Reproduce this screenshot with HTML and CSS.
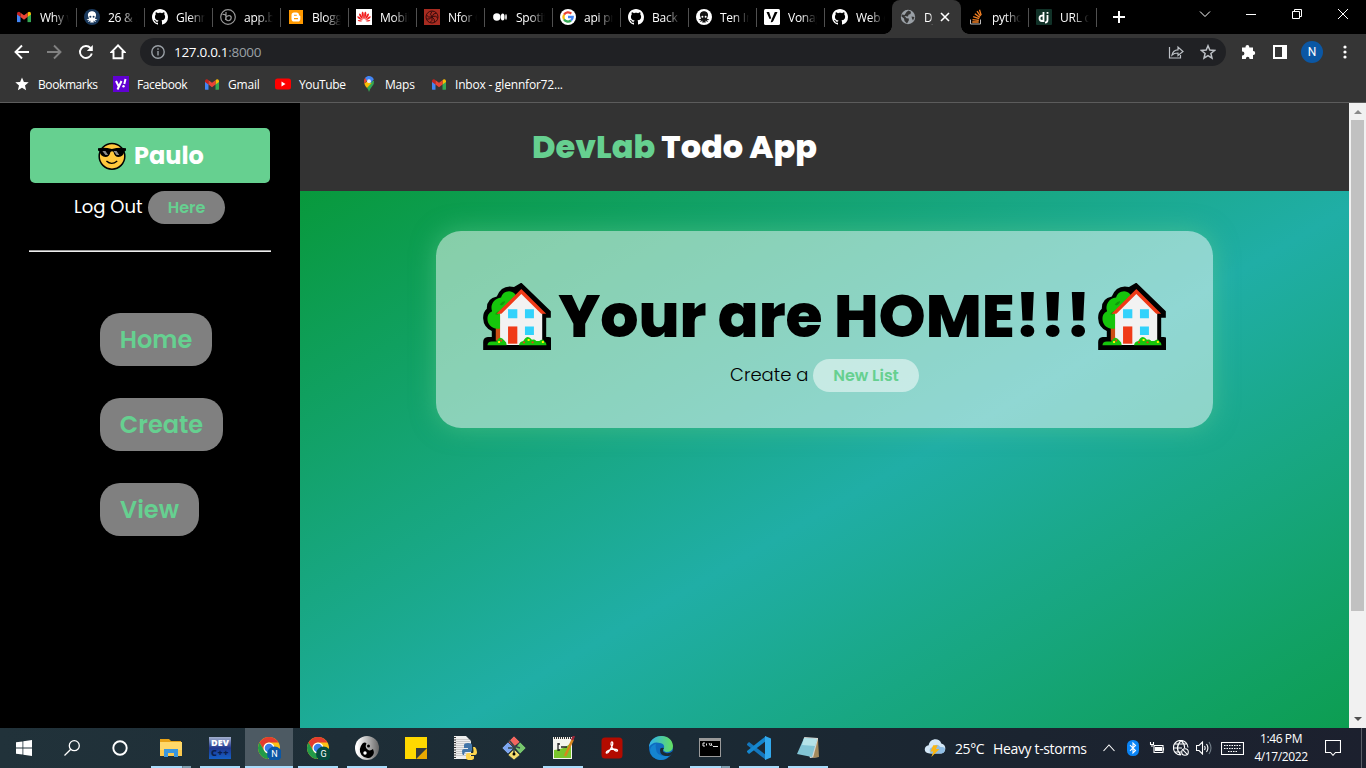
FILE: index.html
```html
<!DOCTYPE html>
<html lang="en">
<head>
<meta charset="utf-8">
<title>DevLab Todo App</title>
<link rel="stylesheet" href="styles.css">
</head>
<body>
<svg class="defs" width="0" height="0">
  <symbol id="gmail" viewBox="0 0 16 12"><path fill="#4285f4" d="M1 12h3V5L0 2v9q0 1 1 1z"/><path fill="#34a853" d="M12 12h3q1 0 1-1V2l-4 3z"/><path fill="#fbbc04" d="M12 1v5l4-3V2q-.4-2.600-2.500-2z"/><path fill="#c5221f" d="M0 2v1l4 3V1L2.500 0Q.4-.6 0 2z"/><path fill="#ea4335" d="M4 6V1l4 3 4-3v5L8 9z"/></symbol>
  <symbol id="github" viewBox="0 0 16 16"><path fill="#fff" d="M8 0C3.580 0 0 3.580 0 8c0 3.540 2.290 6.530 5.470 7.590.4.070.55-.17.55-.38 0-.19-.01-.82-.01-1.490-2.010.37-2.530-.49-2.690-.94-.09-.23-.48-.94-.82-1.130-.28-.15-.68-.52-.01-.53.63-.01 1.080.58 1.230.82.72 1.210 1.870.87 2.330.66.070-.52.28-.87.51-1.070-1.780-.2-3.640-.89-3.640-3.950 0-.87.31-1.590.82-2.150-.08-.2-.36-1.020.08-2.120 0 0 .67-.21 2.200.82.64-.18 1.320-.27 2-.27s1.360.09 2 .27c1.530-1.040 2.200-.82 2.200-.82.44 1.100.16 1.920.08 2.120.51.56.82 1.270.82 2.150 0 3.070-1.870 3.750-3.650 3.950.29.25.54.73.54 1.480 0 1.070-.01 1.930-.01 2.200 0 .21.15.46.55.38A8 8 0 0 0 16 8c0-4.420-3.580-8-8-8z"/></symbol>
  <symbol id="octo" viewBox="0 0 16 16"><path d="M8 2.300c-3 0-4.600 2.200-3.900 4.800.2 1.200.8 1.900.9 2.500-.4.800-1.600.9-2.300.4.300 1 1.600 1.500 2.500 1.100-.2.800-.8 1.200-1.400 1.300.9.500 2.200.2 2.700-.8.100.7-.1 1.400-.4 1.800h3.800c-.3-.4-.5-1.100-.4-1.800.5 1 1.800 1.300 2.700.8-.6-.1-1.200-.5-1.400-1.300.9.400 2.200-.1 2.500-1.100-.7.500-1.900.4-2.300-.4.100-.6.700-1.300.9-2.500.7-2.600-.9-4.800-3.900-4.800z"/><circle cx="6.400" cy="7.800" r="1" fill="var(--eye)"/><circle cx="9.600" cy="7.800" r="1" fill="var(--eye)"/></symbol>
  <symbol id="chrome" viewBox="0 0 24 24"><circle cx="12" cy="12" r="11" fill="#fbc116"/><path fill="#e33b2e" d="M2.500 6.500A11 11 0 0 1 21.500 6.500H12A5.500 5.500 0 0 0 7.200 14.700z"/><path fill="#229a48" d="M2.500 6.500 7.200 14.700A5.500 5.500 0 0 0 13 17.400L11 23A11 11 0 0 1 2.500 6.500z"/><circle cx="12" cy="12" r="5.500" fill="#fff"/><circle cx="12" cy="12" r="4.300" fill="#3b7de9"/></symbol>
  <symbol id="house" viewBox="189 188 204 202"><path d="M189 390v-24q0-14 14-15h12v-18q-25-12-26-38-1-18 11-29-1-31 30-37 14-37 52-29l22-13 89 86v20h-14v58h8q16 1 16 15v24z"/><path fill="#cb4f13" d="M227 310h18v52h-18z"/><path fill="#16c60c" d="M240 325c-25 5-39-14-38-30 0-13 8-19 14-22-7-17 5-39 27-41 3-17 27-28 42-11l10 16-52 48z"/><path fill="#119a0a" d="M239 253c4-7 11-10 16-11 0 7-5 11-11 14zM225 282q4-7 14-10l-6 12z"/><path fill="#f2f2f2" d="M304 215 240 280v95h127v-95z"/><path fill="#f03a17" d="m304 206 75 75h-15l-60-60-60 60h-15z"/><path fill="#32d2fb" d="M264 267h28v27h-28zM315 267h27v27h-27zM315 319h27v26h-27z"/><path fill="#f03a17" d="M264 319h28v52h-28z"/><path fill="#16c60c" d="M202 376q0-12 13-12h14q10-20 24-3 7 4 7 15zM297 376q2-12 13-13 12-22 26-4 9-2 13 4h9q12-10 16 1 6 3 6 12z"/><path fill="#fff200" d="M234 363h6v6h-6zM323 357h6v6h-6zM366 363h6v6h-6z"/><path fill="#f03a17" d="M241 358h5v6h-5zM309 364h6v6h-6zM335 364h6v6h-6z"/></symbol>
</svg>

<header class="tabstrip">
  <div class="tab"><svg class="fav" viewBox="0 0 16 16"><use href="#gmail" x="1" y="2.500" width="14" height="11"/></svg><span>Why w</span></div>
  <div class="tab"><svg class="fav eye-navy" viewBox="0 0 16 16"><circle cx="8" cy="8" r="8" fill="#1b3a5e"/><use href="#octo" fill="#fff"/></svg><span>26 &amp; 2</span></div>
  <div class="tab"><svg class="fav"><use href="#github"/></svg><span>Glennf</span></div>
  <div class="tab"><svg class="fav" viewBox="0 0 16 16" fill="none" stroke="#999" stroke-width="1.200"><circle cx="8" cy="8" r="7.300"/><path d="M2.500 5.500Q5.500 5 6 7L5.500 11M6 3v7.500q2.500 2.500 4.700 0 1.300-2.500-.6-3.700-2.200-.8-4 1.400"/></svg><span>app.bit</span></div>
  <div class="tab"><svg class="fav" viewBox="0 0 16 16"><path fill="#f90" d="M1 1h14v14H1z"/><path fill="#fff" fill-rule="evenodd" d="M6 3.500h2.500q2.500 0 2.500 2.800l1.300.7v2.700Q12.300 12.500 10 12.500H6q-2.500 0-2.500-2.800V6Q3.500 3.500 6 3.500zm0 2.300v1h2.800v-1zm0 3.200v1.200h4V9z"/></svg><span>Blogge</span></div>
  <div class="tab"><svg class="fav" viewBox="0 0 16 16"><path fill="#fff" d="M0 0h16v16H0z"/><g fill="#f21b1b"><path d="M7.700 10.500Q4 4 6.800 2.500q1.500 1 .9 8zM8.300 10.500Q12 4 9.200 2.500q-1.500 1-.9 8zM7 11Q2.200 6.500 3.200 4.500 5.500 4 7 11zM9 11q4.800-4.500 3.800-6.500Q10.500 4 9 11zM6.500 11.500Q1 9.500 1.300 7.200 3.500 7 6.500 11.500zM9.500 11.500q5.500-2 5.200-4.300-2.200-.2-5.200 4.300zM6.300 12Q3 13.500 1.600 11q2-.5 4.700 1zM9.700 12q3.300 1.500 4.700-1-2-.5-4.700 1z"/></g></svg><span>Mobile</span></div>
  <div class="tab"><svg class="fav" viewBox="0 0 16 16"><path fill="#a72b20" d="M0 0h16v16H0z"/><g fill="none" stroke="#350b0b"><circle cx="8" cy="8" r="6"/><path d="M8 8Q5 5 8 2.500M8 8q4-2 5.500 1M8 8q1 4-2 5.500M8 8q-4 1-5.500-2M8 8q1-4 4.500-4M8 8q3 2 2.500 5M8 8q-3 3-5.500 2"/></g></svg><span>Nfor G</span></div>
  <div class="tab"><svg class="fav" viewBox="0 0 16 16" fill="#fff"><circle cx="4.800" cy="8" r="3.700"/><ellipse cx="10.700" cy="8" rx="1.900" ry="3.500"/><ellipse cx="14" cy="8" rx=".8" ry="3.100"/></svg><span>Spotify</span></div>
  <div class="tab"><svg class="fav" viewBox="0 0 16 16"><circle cx="8" cy="8" r="8" fill="#fff"/><g fill="none" stroke-width="2.300"><path stroke="#ea4335" d="M4 5.700A4.700 4.700 0 0 1 11.300 4.700"/><path stroke="#fbbc05" d="M4 10.300A5 5 0 0 1 4 5.700"/><path stroke="#34a853" d="M4 10.300A4.700 4.700 0 0 0 11 11.500"/><path stroke="#4285f4" d="M8 8h4.700Q12.700 10 11 11.500"/></g></svg><span>api pro</span></div>
  <div class="tab"><svg class="fav"><use href="#github"/></svg><span>Back e</span></div>
  <div class="tab"><svg class="fav eye-white" viewBox="0 0 16 16"><circle cx="8" cy="8" r="8" fill="#fff"/><use href="#octo" fill="#111"/></svg><span>Ten Im</span></div>
  <div class="tab"><svg class="fav" viewBox="0 0 16 16"><rect width="16" height="16" rx="1.500" fill="#fff"/><path d="M2.500 3h2.600l2.200 6.500L5.500 10zM10.800 3h2.700L9.300 12q-.7 1.500-2.600 1.300l.7-2.200z"/></svg><span>Vonage</span></div>
  <div class="tab"><svg class="fav"><use href="#github"/></svg><span>Web d</span></div>
  <div class="tab active"><svg class="fav" viewBox="0 0 16 16"><circle cx="8" cy="8" r="7.200" fill="#9aa0a6"/><path fill="#353535" d="M8.500 1.500 11 2.700 10.500 5l-2 .7L8 7.500 4.500 7l2 2.200 2.300.3v2L7 14.500 4.500 12 4 9.500 1.500 7.500q0-.8.5-2L4.500 6 6.500 3zM11.500 7.500l3 .5-1.500 3.500-1-2z"/></svg><span>Dj</span><svg class="close" viewBox="0 0 10 10"><path d="m1 1 8 8M9 1 1 9"/></svg></div>
  <div class="tab"><svg class="fav" viewBox="0 0 16 16" fill="none"><path stroke="#bcbbbb" d="M2.500 10.500V15h10v-4.500"/><path stroke="#f48024" stroke-width="1.300" d="M4.300 13h6.400M4.500 10.700l6.300.6M5.200 7.700l6 2M6.800 4.800l5 3.600M9 2.200l3.500 5M11.500.7l1.700 5.500"/></svg><span>pythor</span></div>
  <div class="tab"><svg class="fav" viewBox="0 0 16 16"><rect width="16" height="16" rx="1" fill="#113228"/><g stroke="#fff" stroke-width="1.800" fill="none"><path d="M7.500 3v9H6Q3.500 12 3.500 9.300 3.500 7 6 6.700h1.500M11.500 6v5q0 2.500-2.500 2.700M11.500 3v1.700"/></g></svg><span>URL di</span></div>
  <svg class="newtab" viewBox="0 0 12 12"><path d="M6 0v12M0 6h12"/></svg>
  <div class="wincontrols">
    <svg viewBox="0 0 12 12"><path d="m1 3.500 5 5 5-5"/></svg>
    <svg viewBox="0 0 12 12"><path d="M1 6.500h10"/></svg>
    <svg viewBox="0 0 12 12"><path d="M1.500 3.500h7v7h-7zM3.500 3.500v-2h7v7h-2"/></svg>
    <svg viewBox="0 0 12 12"><path d="m1 1 10 10M11 1 1 11"/></svg>
  </div>
</header>

<nav class="toolbar">
  <svg class="nav" viewBox="0 0 16 16"><path d="M15 8H2M8 1.500 1.500 8 8 14.500"/></svg>
  <svg class="nav dim" viewBox="0 0 16 16"><path d="M1 8h13M8 1.500 14.500 8 8 14.500"/></svg>
  <svg class="nav" viewBox="0 0 16 16"><path d="M13.800 9.500A6 6 0 1 1 12.500 4"/><path class="solid" d="M14.800 1v6h-6z"/></svg>
  <svg class="nav" viewBox="0 0 16 16"><path d="M8 1.300 1.500 8H3.500v6.300h9V8h2z"/></svg>
  <div class="omnibox">
    <svg class="info" viewBox="0 0 14 14"><circle cx="7" cy="7" r="6.200"/><path d="M7 6v4.500M7 3.300v1.500"/></svg>
    <span class="url"><b>127.0.0.1</b>:8000</span>
    <svg class="omni-icon" viewBox="0 0 16 16"><path d="M1.500 3v11h11v-3M4 11q1-5 6-5.200V3l5 4.500-5 4V9Q6 9 4 11z"/></svg>
    <svg class="omni-icon star" viewBox="0 0 16 16"><path d="m8 1.800 1.800 4.300 4.700.4-3.600 3 1.100 4.600-4-2.500-4 2.500 1.100-4.600-3.600-3 4.700-.4z"/></svg>
  </div>
  <svg class="ext" viewBox="0 0 16 16"><path d="M2 3.500h3.500V3a1.900 1.900 0 0 1 3.800 0v.5H13v3.600h.3a1.900 1.900 0 0 1 0 3.800H13V15H9.500v-.5a1.800 1.800 0 0 0-3.600 0v.5H2v-3.600h.5a1.900 1.900 0 0 0 0-3.800H2z"/></svg>
  <svg class="panel" viewBox="0 0 14 14"><path fill="#fff" fill-rule="evenodd" d="M0 0h14v14H0zM2 2v10h7V2z"/></svg>
  <span class="avatar">N</span>
  <svg class="dots" viewBox="0 0 4 14"><circle cx="2" cy="2" r="1.600"/><circle cx="2" cy="7" r="1.600"/><circle cx="2" cy="12" r="1.600"/></svg>
</nav>

<nav class="bookmarks">
  <a class="bm-star"><svg viewBox="0 0 16 16"><path fill="#fff" d="m8 1.500 1.900 4.400 4.800.4L11 9.500l1.100 4.700L8 11.700l-4.100 2.500L5 9.500 1.300 6.300l4.800-.4z"/></svg>Bookmarks</a>
  <a class="bm-face"><svg viewBox="0 0 16 16"><path fill="#6001d2" d="M0 0h16v16H0z"/><path fill="none" stroke="#fff" stroke-width="2" d="m3 5 2.500 5M8.500 5l-4 8.500M12.500 3l-1.200 5"/><circle cx="10.500" cy="10.300" r="1.200" fill="#fff"/></svg>Facebook</a>
  <a class="bm-mail"><svg viewBox="0 0 16 16"><use href="#gmail" x="1" y="3" width="14" height="11"/></svg>Gmail</a>
  <a class="bm-tube"><svg viewBox="0 0 16 16"><rect y="2.500" width="16" height="11" rx="2.500" fill="red"/><path fill="#fff" d="m6.500 5.500 4 2.500-4 2.500z"/></svg>YouTube</a>
  <a class="bm-maps"><svg viewBox="0 0 16 16"><path fill="#34a853" d="M13 4.500q.5 3-2 6Q8.800 13 8 16q-.6-2.500-2-4l4-6z"/><path fill="#fbbc04" d="M3.300 7.500 6.500 5l4 2L6 12q-2-2-2.700-4.500z"/><path fill="#ea4335" d="M3 5q0-2 1.200-3.300L7 4 3.300 7.500z"/><path fill="#4285f4" d="M4.200 1.700C7-1.200 11.800 0 12.800 3.600L9.500 7 6 5z"/><circle cx="8" cy="5.200" r="1.900" fill="#e9eef5"/></svg>Maps</a>
  <a class="bm-inbox"><svg viewBox="0 0 16 16"><use href="#gmail" x="1" y="3" width="14" height="11"/></svg>Inbox - glennfor72...</a>
</nav>

<div class="viewport">
  <aside class="sidebar">
    <div class="profile"><svg viewBox="296 110 83 82"><circle cx="337.500" cy="152" r="38" fill="#ffc83d" stroke="#000" stroke-width="4.500"/><path d="M296 128q20-3 41 2 22-5 42-2v7l-5 3q-3 16-17 16-12 0-15-15-4-4-9 0-3 15-15 15-14 0-17-16l-5-3z"/><path fill="#8b8b8b" d="M309 136h9l8 12h-8zM342 136h9l8 12h-8z"/><path d="M321 166q15 14 32 0" fill="none" stroke="#000" stroke-width="4"/></svg><span>Paulo</span></div>
    <div class="logout"><span>Log Out</span><a class="pill gray">Here</a></div>
    <hr>
    <div class="menu">
      <a class="menu-home">Home</a>
      <a class="menu-create">Create</a>
      <a class="menu-view">View</a>
    </div>
  </aside>
  <main>
    <div class="appbar"><h1><em>DevLab</em> <span>Todo App</span></h1></div>
    <section class="canvas">
      <div class="card">
        <div class="hero"><svg><use href="#house"/></svg><h2>Your are HOME!!!</h2><svg><use href="#house"/></svg></div>
        <div class="create"><span>Create a</span><a class="pill light">New List</a></div>
      </div>
    </section>
  </main>
  <div class="scrollbar"><i class="up"></i><div class="track"><div class="thumb"></div></div><i class="down"></i></div>
</div>

<footer class="taskbar">
  <div class="sys"><svg viewBox="0 0 16 16"><path fill="#fff" d="M0 2.300 6.500 1.400v6.200H0zM7.300 1.300 16 0v7.600H7.300zM0 8.400h6.500v6.200L0 13.700zM7.300 8.400H16V16l-8.700-1.300z"/></svg></div>
  <div class="sys"><svg viewBox="0 0 16 16" fill="none" stroke="#fff" stroke-width="1.300"><circle cx="10.300" cy="5.700" r="5"/><path d="M6.800 9.300.5 15.500"/></svg></div>
  <div class="sys last"><svg viewBox="0 0 16 16"><circle cx="8" cy="8" r="6.700" fill="none" stroke="#fff" stroke-width="1.900"/></svg></div>

  <div class="app open stacked"><svg viewBox="0 0 24 24"><path fill="#e8a317" d="M1 3h9l2 2h10v5H1z"/><path fill="#ffd869" d="M1 6h22v14H1z"/><path fill="#fbc94e" d="M1 14h22v6H1z"/><path fill="#3a96dd" d="M5 21v-8h14v8h-4v-4H9v4z"/></svg></div>
  <div class="app open"><div class="devcpp"><span>DEV</span><span>C++</span></div></div>
  <div class="app open current"><svg viewBox="0 0 24 24"><use href="#chrome" width="24" height="24"/><circle cx="17.500" cy="18" r="7.500" fill="#0b57a4"/><text class="initial" x="17.500" y="21.200" text-anchor="middle">N</text></svg></div>
  <div class="app open"><svg viewBox="0 0 24 24"><use href="#chrome" width="24" height="24"/><circle cx="17.500" cy="18" r="7.500" fill="#064b3f"/><text class="initial" x="17.500" y="21.200" text-anchor="middle">G</text></svg></div>
  <div class="app open"><svg viewBox="0 0 24 24"><defs><linearGradient id="yin"><stop offset=".1" stop-color="#fff"/><stop offset="1" stop-color="#666"/></linearGradient></defs><circle cx="12" cy="12" r="12" fill="url(#yin)"/><path d="M7.500 7.500q-5 6-1 11.500 4 4.500 9 2.500 5-3 2.500-8.500-3 2.500-5.500.500-3-2.500-1-6-1.500-2-4 0z"/><circle cx="13.500" cy="10" r="1.500"/><circle cx="10" cy="17" r="1.700" fill="#fff"/></svg></div>
  <div class="app"><svg viewBox="0 0 24 24"><path fill="#ffd800" d="M1 1h22v11L12 23H1z"/><path fill="#eaa900" d="M12 23h11V12z"/><path fill="#353a3e" d="M12 23V12h11z"/></svg></div>
  <div class="app"><svg viewBox="0 0 24 24"><path fill="#eee" d="M1 0h12l5 5v18H1z"/><path stroke="#8a8a8a" stroke-dasharray="1 1" stroke-width="15" d="M10 3v18" opacity=".35"/><path stroke="#333" stroke-width="2" stroke-dasharray="1 1.500" d="M2 1v22"/><path fill="#4275a8" d="M9 15q0-2 2-2h4v-1h-4V9q0-2 4-2t4 2v5q0 2-2 2h-4q-2 0-2 3h-1q-1-1-1-4z"/><path fill="#ffd64d" d="M20 11h2q2 2 2 5t-2 3h-5v1h4v2q0 2-4 2t-4-2v-3q0-2 3-2h4q1-1 0-6z"/></svg></div>
  <div class="app"><svg viewBox="0 0 24 24"><g stroke="#24323a" stroke-width=".7"><path fill="#f2665f" d="m12 0 6 6-6 5-6-5z"/><path fill="#77c76d" d="m18 6 6 6-6 6-5-6z"/><path fill="#f4dc6e" d="m12 13 6 6-6 5-6-5z"/><path fill="#7da6ef" d="m6 6 6 6-6 6-6-6z"/></g><path fill="none" stroke="#37464b" stroke-width="1.500" d="m7 4 5 6v8M12 10l6 2M6 12h5"/><circle cx="12" cy="18" r="1.500"/></svg></div>
  <div class="app open"><svg viewBox="0 0 24 24"><path fill="#f4f4ee" d="M2 1h19v22H2z"/><path fill="#79c52c" d="M3 14q9 0 17-7v15H3z"/><path stroke="#333" stroke-width="2" stroke-dasharray="1 1" d="M3 2h17"/><path stroke="#222" stroke-width="1.300" fill="none" d="M7 7v8M7 8h2M7 14h2M10 11h6"/><path stroke="#d7861d" stroke-width="2.500" d="m14 20 8-17"/><path stroke="#9a293a" stroke-width="2.500" d="m21 4 2-4"/></svg></div>
  <div class="app"><svg viewBox="0 0 24 24"><rect x="1.500" y="1.500" width="21" height="21" rx="3.500" fill="#b30b00"/><path fill="none" stroke="#fff" stroke-width="1.300" d="M11.500 6c2.200-.7 1.800 4.500-3.500 10.500-2 1.500-3-.5.500-2.200 4-1.600 9-1.400 9 .2 0 2-5.500-.5-6.500-6 0-1.500 0-2.300.5-2.500z"/></svg></div>
  <div class="app"><svg viewBox="0 0 24 24"><defs><linearGradient id="edge"><stop stop-color="#2fb0ee"/><stop offset="1" stop-color="#65e05d"/></linearGradient></defs><circle cx="12" cy="12" r="12" fill="#0f6bc0"/><path fill="url(#edge)" d="M0 11C1-3 23-4 24 10q0 6-7 6-4-1-2-4 1-4-4-5Q4 5 0 11z"/><path fill="#1b2a34" d="M15 12q-3 4 2 5 3 1 7-2-1 4-4 5-9 1-9-6 0-3 4-2z"/><path fill="#1584d0" d="M7 13q0 8 13 7-3 4-9 4Q1 22 1 14q1-5 6-6-1 2 0 5z"/></svg></div>
  <div class="app open stacked"><svg viewBox="0 0 24 24"><path fill="#9a9a9a" d="M1 2h22v19H1z"/><path d="M2 5h20v15H2z"/><path stroke="#e8e8e8" fill="none" d="M7 7H5v3h2M8.500 7.500v2M11 7l1.500 3M13 7l1 3M15 10.500h5"/></svg></div>
  <div class="app open"><svg viewBox="0 0 24 24"><path fill="#1477bd" d="m0 8 2-2L19 19v5L0 9z"/><path fill="#1587cf" d="m0 16 2 2L19 5V0L0 15z"/><path fill="#32a9ed" d="m18 0 6 2.500v19L18 24z"/></svg></div>
  <div class="app open"><svg viewBox="0 0 24 24"><path fill="#d8d8d2" d="m8 1 14 1v19l-8 1z"/><path fill="#a48a5d" d="m22 3 1 18-6 1z"/><path fill="#82c5d6" d="m8 2 13 1-5 18-15-3z"/><path fill="#b5e3e9" d="m8 2 13 1-2 7-13-1z"/></svg></div>

  <div class="tray">
    <svg class="weather" viewBox="0 0 24 20"><path fill="#d4e7f6" d="M6 16C-1 16-1 8 5 7 6-1 17-2 19 5c6 1 6 10 0 11z"/><path fill="#91bee4" d="M7 16q-3-6 3-7 4-5 8 0 6-1 5 4-1 3-4 3z"/><path fill="#f9b616" d="m10 7h5l-2 4h4L8 20l2-6H7z"/></svg>
    <span class="temp">25°C</span><span class="forecast">Heavy t-storms</span>
    <svg class="chev" viewBox="0 0 12 8"><path d="m.5 7 5.500-6L11.500 7"/></svg>
    <svg class="bt" viewBox="0 0 12 16"><rect width="12" height="16" rx="5.500" fill="#0a84f5" stroke="none"/><path d="m3 5.200 5.500 5.300L6 13V3l2.500 2.500L3 10.800"/></svg>
    <svg class="bat" viewBox="0 0 16 12"><path d="M5 3.500h9v7H5zM14.500 5.500v3M1 2.500h4M1.500 0v2.500M4.500 0v2.500M3 2.500V5"/><path fill="#fff" stroke="none" d="M6 5h7v4H6z"/></svg>
    <svg class="net" viewBox="0 0 16 16"><path d="M15 7.500A7.300 7.300 0 1 0 8 15M8 .7Q.9 8 8 15M8 .7Q12 4 11.500 8M.7 8H9M2 4h12M2 12h6"/><circle cx="12" cy="12" r="3.300"/><path d="m9.700 9.700 4.600 4.600"/></svg>
    <svg class="vol" viewBox="0 0 16 14"><path d="M.5 4.500H3L6.500 1v12L3 9.500H.5zM8.500 5q1.300 2 0 4M10.500 3q2.800 4 0 8"/><path stroke="#74808a" d="M13 1q4 6 0 12"/></svg>
    <svg class="kbd" viewBox="0 0 23 13"><path d="M.5.500h22v12H.5z"/><path stroke-dasharray="1.500 1" d="M3 3.500h17M3 6.500h17M7 9.500h9"/></svg>
    <div class="clock"><span>1:46 PM</span><span>4/17/2022</span></div>
    <svg class="note" viewBox="0 0 16 16"><path d="M.5.500h15v12h-5L8 15.300 5.500 12.500h-5z"/></svg>
    <i class="desk"></i>
  </div>
</footer>
</body>
</html>
```
FILE: styles.css
```css
* { box-sizing: border-box; }
body {
  margin: 0;
  width: 1366px;
  height: 768px;
  overflow: hidden;
  display: flex;
  flex-direction: column;
  background: #000;
  color: #fff;
  font-family: "Segoe UI", "Open Sans", "Noto Sans", sans-serif;
  font-size: 12px;
}
svg { display: block; flex: none; }
.defs { position: absolute; }

/* tab strip */
.tabstrip { height: 34px; flex: none; display: flex; padding-left: 8px; background: #000; }
.tab { width: 68px; flex: none; height: 34px; display: flex; align-items: center; padding-left: 8px; position: relative; }
.tab::after { content: ""; position: absolute; right: -1px; top: 8px; width: 1px; height: 19px; background: #505050; }
.fav { width: 16px; height: 16px; }
.eye-navy { --eye: #1b3a5e; }
.eye-white { --eye: #fff; }
.tab span {
  width: 29px; margin-left: 8px; overflow: hidden; white-space: nowrap; letter-spacing: -.25px;
  -webkit-mask-image: linear-gradient(90deg, #000 45%, transparent);
  mask-image: linear-gradient(90deg, #000 45%, transparent);
}
.tab.active { background: #353535; border-radius: 8px 8px 0 0; width: 69px; margin-right: -1px; }
.tab.active::after { right: -8px; top: auto; bottom: 0; width: 8px; height: 8px; background: radial-gradient(circle at 100% 0, transparent 7.500px, #353535 8px); }
.tab.active::before { content: ""; position: absolute; left: -8px; bottom: 0; width: 8px; height: 8px; background: radial-gradient(circle at 0 0, transparent 7.500px, #353535 8px); }
.tab.active span { width: 9px; -webkit-mask-image: linear-gradient(90deg, #000 70%, transparent); mask-image: linear-gradient(90deg, #000 70%, transparent); }
.close { width: 10px; height: 10px; margin-left: 7px; stroke: #fff; stroke-width: 1.600; }
.newtab { width: 12px; height: 12px; margin: 11px 0 0 17px; stroke: #fff; stroke-width: 2; }
.wincontrols { margin-left: auto; display: flex; gap: 34px; padding: 8px 17px 0 0; }
.wincontrols svg { width: 12px; height: 12px; fill: none; stroke: #fff; }

/* address row */
.toolbar { height: 36px; flex: none; display: flex; align-items: center; background: #353535; padding-left: 14px; }
.nav { width: 16px; height: 16px; margin-right: 16px; fill: none; stroke: #fff; stroke-width: 1.900; }
.nav.dim { stroke: #818181; }
.nav .solid { fill: #fff; stroke: none; }
.omnibox { width: 1086px; margin-left: -2px; height: 28px; border-radius: 14px; background: #202124; display: flex; align-items: center; padding-left: 11px; }
.info { width: 14px; height: 14px; fill: none; stroke: #9aa0a6; stroke-width: 1.400; }
.url { margin-left: 9px; flex: 1; font-size: 13.500px; letter-spacing: -.3px; color: #9aa0a6; }
.url b { font-weight: 400; color: #fff; }
.omni-icon { width: 16px; height: 16px; margin-right: 16px; fill: none; stroke: #bdc1c6; stroke-width: 1.200; }
.omni-icon.star { margin-right: 10px; stroke-width: 1.500; }
.ext { width: 16px; height: 16px; margin-left: 14px; fill: #fff; }
.panel { width: 14px; height: 14px; margin-left: 17px; }
.avatar { width: 22px; height: 22px; margin-left: 14px; border-radius: 50%; background: #0b57a4; text-align: center; font: 12px/22px Roboto, sans-serif; }
.dots { width: 4px; height: 14px; margin-left: 20px; fill: #fff; }

/* bookmarks row */
.bookmarks { height: 33px; flex: none; display: flex; background: #353535; border-bottom: 1px solid #5c5c5c; padding: 0 0 4px 14px; }
.bookmarks a { display: flex; align-items: center; gap: 8px; white-space: nowrap; letter-spacing: -.4px; flex: none; }
.bookmarks svg { width: 16px; height: 16px; }
.bm-star { width: 99px; }
.bm-face { width: 91px; }
.bm-mail { width: 71px; }
.bm-tube { width: 86px; }
.bm-maps { width: 70px; }
.bookmarks .bm-inbox, .bookmarks .bm-mail, .bookmarks .bm-maps { letter-spacing: -.2px; }

/* page */
.viewport { height: 625px; flex: none; display: flex; overflow: hidden; font-family: Poppins, Inter, sans-serif; }
.sidebar { width: 300px; flex: none; background: #000; padding-top: 25px; }
.profile { width: 240px; height: 55px; margin: 0 auto; border-radius: 5px; background: #66d090; display: flex; align-items: center; padding-left: 68px; font-size: 24px; font-weight: 700; }
.profile svg { width: 28px; height: 28px; }
.profile span { margin-left: 8px; }
.logout { display: flex; align-items: center; height: 33px; margin: 8px 0 0 74px; font-size: 18px; }
.logout span { width: 74px; height: 33px; line-height: 32px; white-space: nowrap; }
.pill { height: 33px; border-radius: 17px; text-align: center; color: #66d090; font-size: 16px; line-height: 33px; font-weight: 600; }
.gray { width: 77px; background: #808080; }
.light { width: 106px; background: rgba(255, 255, 255, .5); }
hr { width: 242px; height: 2px; margin: 26px auto 0; border: 0; border-top: 1px solid #9a9a9a; background: #eee; }
.menu { display: flex; flex-direction: column; gap: 32px; margin: 61px 0 0 100px; }
.menu a { height: 53px; border-radius: 20px; background: #808080; color: #66d090; font-size: 24px; line-height: 53px; font-weight: 600; text-align: center; }
.menu-home { width: 112px; }
.menu-create { width: 123px; }
.menu-view { width: 99px; }

main { width: 1049px; flex: none; }
.appbar { height: 88px; background: #333; padding-left: 232px; }
h1 { margin: 0; font-size: 32px; line-height: 88px; font-weight: 800; white-space: nowrap; }
h1 em { font-style: normal; color: #66d090; }
.canvas { height: 665px; padding-top: 40px; background: linear-gradient(150deg, #08993c, #20aea6 49%, #08993c); }
.card { width: 777px; height: 197px; margin: 0 auto; border-radius: 25px; background: rgba(255, 255, 255, .5); box-shadow: 0 0 25px rgba(102, 208, 144, .5); color: #000; padding-top: 52px; }
.hero { display: flex; justify-content: space-between; padding: 0 47px; height: 68px; }
.hero svg { width: 68px; height: 67px; }
h2 { margin: 0; font-size: 60px; line-height: 66px; font-weight: 800; white-space: nowrap; }
.create { display: flex; align-items: center; height: 33px; margin: 8px 0 0 294px; font-size: 18px; font-weight: 300; }
.create span { width: 83px; height: 33px; line-height: 32px; white-space: nowrap; }

.scrollbar { width: 17px; flex: none; background: #f1f1f1; display: flex; flex-direction: column; align-items: center; }
.scrollbar i { width: 0; height: 0; border: 4px solid transparent; flex: none; }
.scrollbar .up { border-top: 0; border-bottom-color: #8a8a8a; margin: 7px 0 6px; }
.scrollbar .down { border-bottom: 0; border-top-color: #505050; margin: 6px 0 7px; }
.track { flex: 1; }
.thumb { width: 13px; height: 491px; background: #c1c1c1; }

/* taskbar */
.taskbar { height: 40px; flex: none; display: flex; background: linear-gradient(90deg, #21323a, #1b2a34 50%, #1b2430 75%, #1c202e); }
.sys { width: 48px; flex: none; display: flex; align-items: center; justify-content: center; }
.sys.last { margin-right: 3px; }
.sys svg { width: 16px; height: 16px; }
.app { width: 49px; flex: none; display: flex; align-items: center; padding-left: 12px; position: relative; }
.app svg { width: 24px; height: 24px; }
.app.open::after { content: ""; position: absolute; left: 4px; width: 40px; bottom: 0; height: 2px; background: #a9dcfb; }
.app.stacked::after { background: linear-gradient(90deg, #a9dcfb 31px, #516c7b 31px, #7e9fb0 32px); }
.app.current { background: linear-gradient(#4d5a63, #4d5a63) no-repeat 0 0 / 48px 100%; }
.app.current::after { left: 0; width: 48px; }
.initial { fill: #fff; font: 9px Roboto, sans-serif; }
.devcpp { width: 22px; height: 22px; margin-left: 1px; background: linear-gradient(#a3b0cf, #20378e 50%, #1560c8); display: flex; flex-direction: column; align-items: center; justify-content: space-evenly; font: 800 9px/10px "Open Sans", sans-serif; }
.devcpp span + span { color: #0a1f4d; letter-spacing: .5px; }
.tray { display: flex; align-items: center; margin-left: auto; width: 442px; flex: none; font-size: 14px; white-space: nowrap; }
.tray svg { fill: none; stroke: #fff; stroke-width: 1.100; }
.tray .weather { width: 22px; height: 18px; stroke: none; }
.temp { width: 38px; margin-left: 9px; letter-spacing: -.4px; }
.forecast { width: 110px; letter-spacing: -.35px; }
.chev { width: 12px; height: 8px; }
.tray .bt { width: 12px; height: 16px; margin-left: 12px; }
.bat { width: 16px; height: 12px; margin-left: 10px; }
.net { width: 16px; height: 16px; margin-left: 8px; }
.vol { width: 16px; height: 14px; margin-left: 7px; }
.kbd { width: 23px; height: 13px; margin-left: 9px; }
.clock { width: 62px; margin-left: 6px; display: flex; flex-direction: column; align-items: center; font-size: 12px; line-height: 18px; letter-spacing: -.4px; }
.note { width: 16px; height: 16px; margin-left: 13px; }
.desk { width: 1px; height: 40px; margin-left: 20px; background: #5b5f68; }
```
